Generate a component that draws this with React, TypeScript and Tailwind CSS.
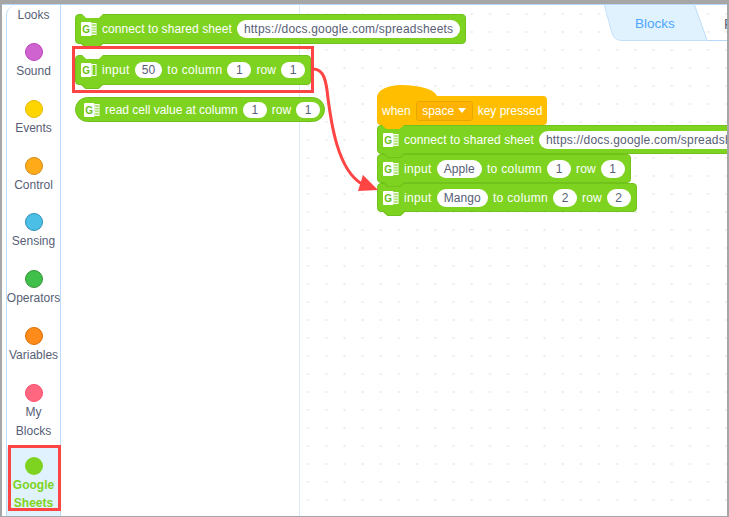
import React from 'react';

const categories = [
  { name: ['Sound'], color: 'bg-[#cf63cf] border-[#bd42bd]' },
  { name: ['Events'], color: 'bg-[#ffd500] border-[#e6b800]' },
  { name: ['Control'], color: 'bg-[#ffab19] border-[#cf8b17]' },
  { name: ['Sensing'], color: 'bg-[#4cbfe6] border-[#2e8eb8]' },
  { name: ['Operators'], color: 'bg-[#40bf4a] border-[#389438]' },
  { name: ['Variables'], color: 'bg-[#ff8c1a] border-[#db6e00]' },
  { name: ['My', 'Blocks'], color: 'bg-[#ff6680] border-[#ff4d6a]' },
];

const SheetIcon = ({ plain }: { plain?: boolean }) => (
  <svg width="17" height="18" viewBox="0 0 17 18" className="shrink-0">
    <rect x="1" y="2" width="10.5" height="14" rx="1" fill="#fff" />
    <text x="6.2" y="13" textAnchor="middle" fontSize="10" fontWeight="700" fontFamily="Liberation Sans" fill="#6cbf1a">G</text>
    <rect x="12" y="3.5" width="4" height="11" fill="none" stroke="#fff" strokeWidth="1" />
    {!plain && <path d="M12 6.5h4M12 9h4M12 11.5h4M14 3.5v11" stroke="#fff" strokeWidth="0.8" />}
  </svg>
);

const Pill = ({ children, small }: { children: React.ReactNode; small?: boolean }) => (
  <span className={`flex items-center justify-center rounded-full bg-white px-[7px] min-w-[24px] text-[#575e75] shrink-0 ${small ? 'h-4' : 'h-[18px]'}`}>
    {children}
  </span>
);

const Url = () => <Pill><span className="tracking-[0.2px]">https://docs.google.com/spreadsheets</span></Pill>;

const Wide = ({ children }: { children: React.ReactNode }) => <span className="tracking-[0.35px]">{children}</span>;

const Block = ({ children, notch, className = 'h-[29px]' }: { children: React.ReactNode; notch?: boolean; className?: string }) => (
  <div className={`relative flex w-fit items-center gap-[5px] rounded-[4px] border border-[#71c21a] bg-[#7ed321] pl-1 pr-[5px] text-white whitespace-nowrap tracking-[0.08px] ${className}`}>
    {notch && <span className="absolute left-[6px] -top-px h-1 w-[21px] bg-white [clip-path:polygon(0_0,100%_0,80%_100%,20%_100%)]" />}
    <span className="absolute left-[5px] -bottom-[5px] z-10 h-1 w-[22px] bg-[#71c21a] [clip-path:polygon(0_0,100%_0,80%_100%,20%_100%)]" />
    <span className="absolute left-[6px] -bottom-[4px] z-10 h-1 w-5 bg-[#7ed321] [clip-path:polygon(0_0,100%_0,80%_100%,20%_100%)]" />
    {children}
  </div>
);

export default function App() {
  return (
    <div className="relative h-[517px] w-[729px] overflow-hidden bg-[#a6a6a6] pl-0.5 pr-0.5 pt-1 pb-px text-[12px] font-['Liberation_Sans',sans-serif]">
      <div className="flex h-full overflow-hidden border-t border-[#b5d9fb] bg-white">
        {/* category list */}
        <div className="ml-1 flex h-[520px] w-[55px] shrink-0 flex-col items-center overflow-hidden rounded-tl-[10px] border-x border-[#bcdcfb] text-[#575e75] leading-[19px]">
          <div className="mb-[19px] h-[19px] pt-px">Looks</div>
          <div className="flex flex-col gap-[18.8px]">
            {categories.map((c) => (
              <div key={c.name[0]} className="flex flex-col items-center">
                <span className={`h-[18px] w-[18px] rounded-full border ${c.color}`} />
                <div className="mt-px text-center">
                  {c.name.map((line) => (
                    <div key={line}>{line}</div>
                  ))}
                </div>
              </div>
            ))}
          </div>
          <div className="mt-[6px] flex w-full flex-1 flex-col items-center bg-[#e1f2ff] pt-[10px] font-bold leading-[18px] text-[#7ed321]">
            <span className="h-[18px] w-[18px] rounded-full bg-[#7ed321]" />
            <div className="mt-px text-center">
              <div>Google</div>
              <div>Sheets</div>
            </div>
          </div>
        </div>

        {/* block flyout */}
        <div className="relative z-10 flex w-[239px] shrink-0 flex-col border-r border-[#d9ebfb] pl-[14px] pt-[9px]">
          <Block notch className="h-[30px]">
            <SheetIcon />
            <span>connect to shared sheet</span>
            <Url />
          </Block>
          <Block notch className="mt-[11px] h-[30px]">
            <SheetIcon plain />
            <Wide>input</Wide>
            <Pill small>50</Pill>
            <Wide>to column</Wide>
            <Pill small>1</Pill>
            <span>row</span>
            <Pill small>1</Pill>
          </Block>
          <div className="mt-3 flex h-[25px] w-fit items-center gap-[5px] rounded-full border border-[#71c21a] bg-[#7ed321] pl-[7px] pr-1 text-white whitespace-nowrap">
            <SheetIcon />
            <span>read cell value at column</span>
            <Pill small>1</Pill>
            <span>row</span>
            <Pill small>1</Pill>
          </div>
        </div>

        {/* workspace */}
        <div className="relative flex-1 overflow-hidden bg-white bg-[radial-gradient(circle,#ececec_1px,transparent_1.2px)] bg-[length:18.2px_18px] bg-[position:-1px_0px]">
          <div className="absolute left-[77px] top-[80px]">
            <span className="block h-[12px] w-[60px] rounded-[24px_36px_0_0/12px_12px_0_0] bg-[#ffbf00]" />
            <div className="relative -mt-px flex h-[29px] w-fit items-center gap-[5px] rounded-r-[4px] rounded-bl-[4px] bg-[#ffbf00] pl-[5px] pr-[5px] text-white whitespace-nowrap">
              <span>when</span>
              <span className="flex h-5 w-[57px] items-center justify-center gap-1 rounded-[3px] border border-[#e6a800] bg-[#ffb300]">
                space
                <span className="h-0 w-0 border-x-[4px] border-t-[5px] border-x-transparent border-t-white" />
              </span>
              <span>key pressed</span>
              <span className="absolute left-[5px] -bottom-1 z-10 h-1 w-[22px] bg-[#ffbf00] [clip-path:polygon(0_0,100%_0,80%_100%,20%_100%)]" />
            </div>
            <Block>
              <SheetIcon />
              <span>connect to shared sheet</span>
              <Url />
            </Block>
            <Block>
              <SheetIcon />
              <Wide>input</Wide>
              <Pill>Apple</Pill>
              <Wide>to column</Wide>
              <Pill>1</Pill>
              <span>row</span>
              <Pill>1</Pill>
            </Block>
            <Block>
              <SheetIcon />
              <Wide>input</Wide>
              <Pill>Mango</Pill>
              <Wide>to column</Wide>
              <Pill>2</Pill>
              <span>row</span>
              <Pill>2</Pill>
            </Block>
          </div>

          {/* tabs */}
          <div className="absolute right-0 top-0 h-9 w-[125px]">
            <svg width="125" height="36" viewBox="0 0 125 36" className="absolute left-0 top-0">
              <path d="M2 -1 H92 L105 35.5 H125" fill="none" stroke="#b5d9fb" />
              <path d="M2 -1 L10 28 Q12 35.5 20 35.5 H105 L92 -1 Z" fill="#e1f2ff" stroke="#c3e0fb" />
            </svg>
            <span className="absolute left-[33px] top-[10px] text-[13.5px] leading-[18px] text-[#4da6ff]">Blocks</span>
            <span className="absolute left-[122px] top-[10px] text-[14px] leading-[18px] text-[#575e75]">Python</span>
          </div>
        </div>
      </div>

      {/* annotations */}
      <div className="absolute left-[72px] top-[46px] z-20 h-[47px] w-[242px] border-[3px] border-[#ff4444]" />
      <div className="absolute left-2 top-[445px] z-20 h-[66px] w-[53px] border-[3px] border-[#ff4444]" />
      <svg width="729" height="517" className="pointer-events-none absolute left-0 top-0 z-20">
        <path d="M314 69 C322 70 325 76 327 90 C331 125 338 170 362 184" fill="none" stroke="#ff4444" strokeWidth="3" />
        <path d="M363 175 L358 191 L378 190 Z" fill="#ff4444" />
      </svg>
    </div>
  );
}
